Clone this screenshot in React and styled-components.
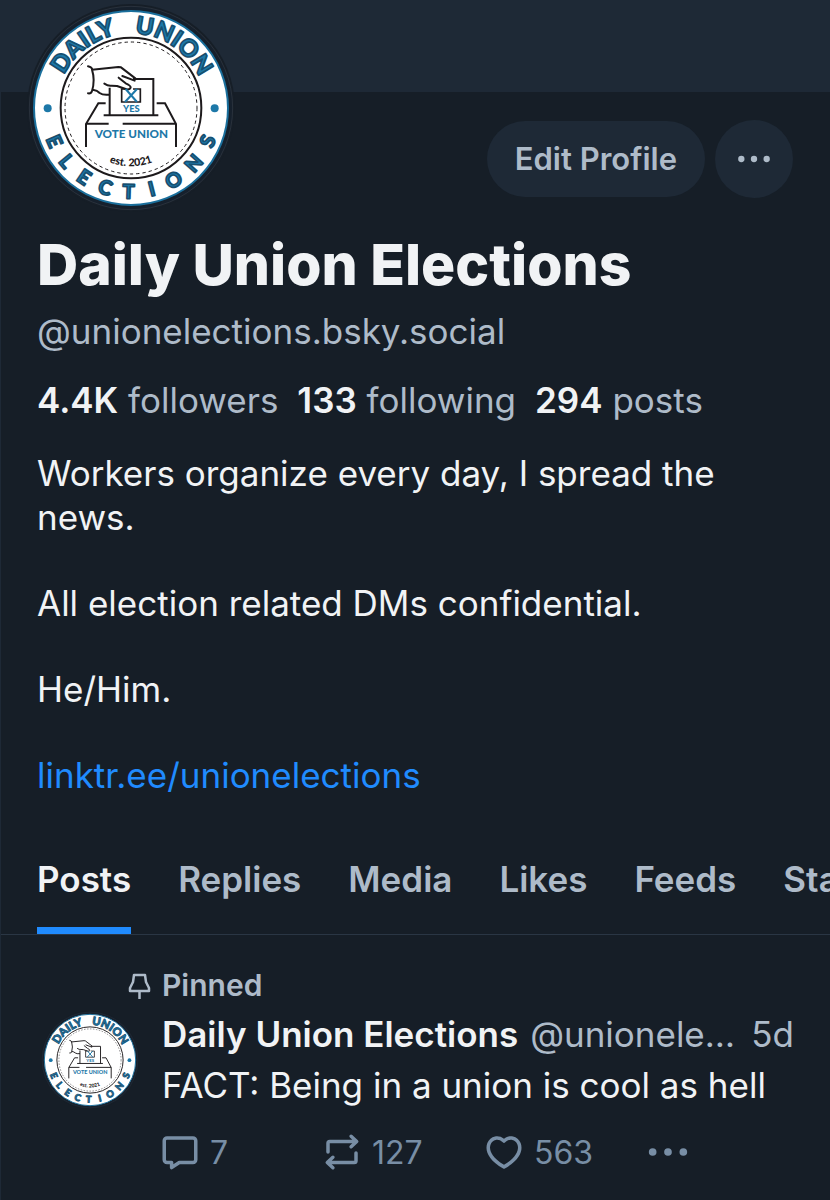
import React from 'react'
import styled, { createGlobalStyle } from 'styled-components'

const GlobalStyle = createGlobalStyle`
  * {
    box-sizing: border-box;
  }

  body {
    margin: 0;
    background: #161e27;
    color: #f1f3f5;
    font-family: Inter, 'Liberation Sans', sans-serif;
    font-optical-sizing: none;
    font-size: 35px;
    line-height: 43px;
    overflow-x: hidden;
  }

  h1, p {
    margin: 0;
  }

  button {
    border: 0;
    padding: 0;
    background: none;
    color: inherit;
    font: inherit;
    font-optical-sizing: none;
    cursor: pointer;
  }
`

const Page = styled.main`
  min-height: 100vh;
  border-left: 1px solid #1e2936;
`

const Banner = styled.div`
  height: 92px;
  background: #1e2936;
`

const Header = styled.header`
  padding: 0 37px 0 36px;
`

const TopRow = styled.div`
  display: flex;
  justify-content: space-between;
  align-items: flex-start;
  margin: -88px 0 0 -10px;
`

const Actions = styled.div`
  display: flex;
  align-items: center;
  gap: 10px;
  margin-top: 116px;
`

const EditButton = styled.button`
  height: 76px;
  padding: 0 28px 2px;
  border-radius: 38px;
  background: #1e2936;
  color: #aebbc9;
  font-size: 31px;
  font-weight: 600;
`

const RoundButton = styled.button`
  display: flex;
  align-items: center;
  justify-content: center;
  width: 78px;
  height: 78px;
  border-radius: 50%;
  background: #1e2936;
  color: #aebbc9;
`

const Name = styled.h1`
  margin-top: 18px;
  font-size: 57px;
  font-weight: 800;
  line-height: 70px;
`

const Handle = styled.p`
  margin-top: 10px;
  color: #aebbc9;
`

const Stats = styled.div`
  display: flex;
  gap: 19px;
  margin-top: 26px;
`

const Stat = styled.span`
  color: #aebbc9;

  strong {
    color: #f1f3f5;
    font-weight: 600;
  }
`

const Bio = styled.div`
  display: flex;
  flex-direction: column;
  gap: 42px;
  margin-top: 29px;
  line-height: 44px;
`

const BioLink = styled.a`
  color: #208bfe;
  text-decoration: none;
`

const Tabs = styled.nav`
  display: flex;
  gap: 47px;
  margin-top: 40px;
  padding: 0 36px;
  overflow: hidden;
  border-bottom: 1px solid #2a3644;
`

const Tab = styled.button`
  flex: none;
  padding: 21px 0 26px;
  border-bottom: 7px solid ${props => props.$active ? '#208bfe' : 'transparent'};
  color: ${props => props.$active ? '#f1f3f5' : '#aebbc9'};
  font-weight: 600;
`

const Post = styled.article`
  padding: 29px 36px 20px 40px;
`

const Pinned = styled.div`
  display: flex;
  align-items: center;
  gap: 7px;
  padding-left: 86px;
  color: #aebbc9;
  font-size: 30px;
  font-weight: 600;
`

const PostRow = styled.div`
  display: flex;
  gap: 23px;
  margin-top: 4px;
`

const PostMain = styled.div`
  flex: 1;
  min-width: 0;
  padding-top: 2px;
`

const Meta = styled.div`
  display: flex;
  gap: 12px;
  color: #aebbc9;
  white-space: nowrap;

  strong {
    color: #f1f3f5;
    font-weight: 600;
  }
`

const MetaHandle = styled.span`
  flex: 1;
  min-width: 0;
  overflow: hidden;
  text-overflow: ellipsis;
`

const PostText = styled.p`
  margin-top: 8px;
`

const PostActions = styled.div`
  display: grid;
  grid-template-columns: repeat(4, 162px);
  margin: 22px 0 0 -3px;
  color: #788ea5;
  font-size: 32px;
`

const PostAction = styled.button`
  display: flex;
  align-items: center;
  gap: 9px;
`

const HEART = 'M16.734 5.091c-1.238-.276-2.708.047-4.022 1.38a1 1 0 0 1-1.424 0C9.974 5.137 8.504 4.814 7.266 5.09c-1.263.282-2.379 1.206-2.92 2.556C3.33 10.18 4.252 14.84 12 19.348c7.747-4.508 8.67-9.168 7.654-11.7-.541-1.351-1.657-2.275-2.92-2.557Zm4.777 1.812c1.604 4-.494 9.69-9.022 14.47a1 1 0 0 1-.978 0C2.983 16.592.885 10.902 2.49 6.902c.779-1.942 2.414-3.334 4.342-3.764 1.697-.378 3.552.003 5.169 1.286 1.617-1.283 3.472-1.664 5.17-1.286 1.927.43 3.562 1.822 4.34 3.764Z'
const DOTS = 'M2 12a2 2 0 1 1 4 0 2 2 0 0 1-4 0Zm16 0a2 2 0 1 1 4 0 2 2 0 0 1-4 0Zm-6-2a2 2 0 1 0 0 4 2 2 0 0 0 0-4Z'
const BUBBLE = 'M4.6 4h14.8A1.6 1.6 0 0 1 21 5.6v10.800a1.6 1.6 0 0 1-1.6 1.6H11.6L7.2 20.9V18H4.6A1.6 1.6 0 0 1 3 16.4V5.6A1.6 1.6 0 0 1 4.6 4Z'
const REPOST = 'M4 12V7a1 1 0 0 1 1-1h15.3M17.2 3l3.200 3-3.200 3M20 12.5V17a1 1 0 0 1-1 1H3.7M6.800 15l-3.200 3 3.200 3'

const Icon = ({ name, size }) => (
  <svg width={size} height={size} viewBox="0 0 24 24" aria-hidden="true">
    {name === 'heart' && <path d={HEART} fill="currentColor" />}
    {name === 'dots' && <path d={DOTS} fill="currentColor" />}
    {(name === 'bubble' || name === 'repost') &&
      <path
        d={name === 'bubble' ? BUBBLE : REPOST}
        fill="none"
        stroke="currentColor"
        strokeWidth="2"
        strokeLinecap="round"
        strokeLinejoin="round"
      />}
  </svg>
)

const PinIcon = () => (
  <svg width="28" height="28" viewBox="0 0 28 28" fill="none" stroke="currentColor" strokeWidth="2.5" strokeLinejoin="round" aria-hidden="true">
    <path d="M7 3h11l1 7 3 6v3H3v-3l3-6 1-7zM12.5 19v8" />
  </svg>
)

const Seal = styled.svg`
  flex: none;
  display: block;
  width: ${props => props.$size}px;
  height: ${props => props.$size}px;
  font-family: Lato, sans-serif;
`

// place of each bottom letter along the lower half circle
const LETTERS = [
  ['E', 13], ['L', 22], ['E', 31], ['C', 40], ['T', 49], ['I', 58], ['O', 67], ['N', 77], ['S', 87]
]

const Logo = ({ size, id }) => (
  <Seal $size={size} viewBox="22 11 624 624" role="img" aria-label="Daily Union Elections">
    <defs>
      <path id={`${id}-top`} d="M110 323a224 224 0 0 1 448 0" />
      <path id={`${id}-bottom`} d="M62 323a272 272 0 0 0 544 0" />
      <path id={`${id}-est`} d="M159 323a175 175 0 0 0 350 0" />
    </defs>
    <circle cx="334" cy="323" r="312" fill="#161e27" />
    <circle cx="334" cy="323" r="305" fill="#16202c" stroke="#333b46" strokeWidth="2" />
    <circle cx="334" cy="323" r="291" fill="#fff" stroke="#1a6f9c" strokeWidth="6" />
    <circle cx="334" cy="323" r="211" fill="none" stroke="#1d1a1c" strokeWidth="6" />
    <circle cx="334" cy="323" r="198" fill="none" stroke="#1d1a1c" strokeWidth="3" strokeDasharray="10 9" />
    <circle cx="84" cy="324" r="12" fill="#1d78a8" />
    <circle cx="585" cy="324" r="12" fill="#1d78a8" />
    <g fill="#1d78a8" stroke="#174f70" strokeWidth="5" strokeLinejoin="round" fontWeight="900" textAnchor="middle">
      <text fontSize="72">
        <textPath href={`#${id}-top`} startOffset="29%">DAILY</textPath>
      </text>
      <text fontSize="72">
        <textPath href={`#${id}-top`} startOffset="69%">UNION</textPath>
      </text>
      <text fontSize="60">
        {LETTERS.map(([letter, place]) => (
          <textPath key={place} href={`#${id}-bottom`} startOffset={`${place}%`}>{letter}</textPath>
        ))}
      </text>
    </g>
    <g fill="none" stroke="#1d1a1c" strokeWidth="6">
      <path d="M199 440V371L236 309H258M411 309H436L469 371V440" />
      <path d="M199 370H267M309 370H469M252 345H416" />
      <path d="M270 345V262M340 236H401V345" />
      <path d="M340 266H362V305H306V266H318" strokeWidth="5" />
      <path d="M205 198Q218 201 217 208Q227 240 217 272Q214 281 205 279M217 208L296 200L304 201L347 234M222 269Q232 270 240 278Q249 285 268 283M254 250Q266 258 276 256L292 257L318 266Q330 270 333 262Q334 256 318 249L297 232M308 227L345 241" strokeLinecap="round" strokeLinejoin="round" />
    </g>
    <path d="M318 266L352 305M352 266L316 305" fill="none" stroke="#1d78a8" strokeWidth="6" />
    <g fill="#1d78a8" fontWeight="900" textAnchor="middle">
      <text x="335" y="335" fontSize="28">YES</text>
      <text x="335" y="412" fontSize="35">VOTE UNION</text>
    </g>
    <text fontSize="32" fontWeight="900" fill="#1d1a1c" textAnchor="middle">
      <textPath href={`#${id}-est`} startOffset="50%">est. 2021</textPath>
    </text>
  </Seal>
)

const stats = [
  { count: '4.4K', label: 'followers' },
  { count: '133', label: 'following' },
  { count: '294', label: 'posts' }
]

const tabs = ['Posts', 'Replies', 'Media', 'Likes', 'Feeds', 'Starter Packs']

const postActions = [
  { icon: 'bubble', label: 'Reply', count: '7', size: 42 },
  { icon: 'repost', label: 'Repost', count: '127', size: 42 },
  { icon: 'heart', label: 'Like', count: '563', size: 42 },
  { icon: 'dots', label: 'More', size: 46 }
]

class App extends React.Component {

  state = {
    tab: 'Posts'
  }

  handleTab = tab => {
    this.setState({ tab })
  }

  render () {
    return (
      <Page>
        <GlobalStyle />
        <Banner />
        <Header>
          <TopRow>
            <Logo size={208} id="profile" />
            <Actions>
              <EditButton>Edit Profile</EditButton>
              <RoundButton aria-label="More options"><Icon name="dots" size={38} /></RoundButton>
            </Actions>
          </TopRow>
          <Name>Daily Union Elections</Name>
          <Handle>@unionelections.bsky.social</Handle>
          <Stats>
            {stats.map(stat => (
              <Stat key={stat.label}><strong>{stat.count}</strong> {stat.label}</Stat>
            ))}
          </Stats>
          <Bio>
            <p>Workers organize every day, I spread the news.</p>
            <p>All election related DMs confidential.</p>
            <p>He/Him.</p>
            <p><BioLink href="#linktree">linktr.ee/unionelections</BioLink></p>
          </Bio>
        </Header>
        <Tabs>
          {tabs.map(tab => (
            <Tab key={tab} $active={this.state.tab === tab} onClick={() => this.handleTab(tab)}>{tab}</Tab>
          ))}
        </Tabs>
        <Post>
          <Pinned><PinIcon />Pinned</Pinned>
          <PostRow>
            <Logo size={98} id="post" />
            <PostMain>
              <Meta>
                <strong>Daily Union Elections</strong>
                <MetaHandle>@unionelections.bsky.social</MetaHandle>
                <span>5d</span>
              </Meta>
              <PostText>FACT: Being in a union is cool as hell</PostText>
              <PostActions>
                {postActions.map(action => (
                  <PostAction key={action.icon} aria-label={action.label}>
                    <Icon name={action.icon} size={action.size} />
                    {action.count}
                  </PostAction>
                ))}
              </PostActions>
            </PostMain>
          </PostRow>
        </Post>
      </Page>
    )
  }
}

export default App
